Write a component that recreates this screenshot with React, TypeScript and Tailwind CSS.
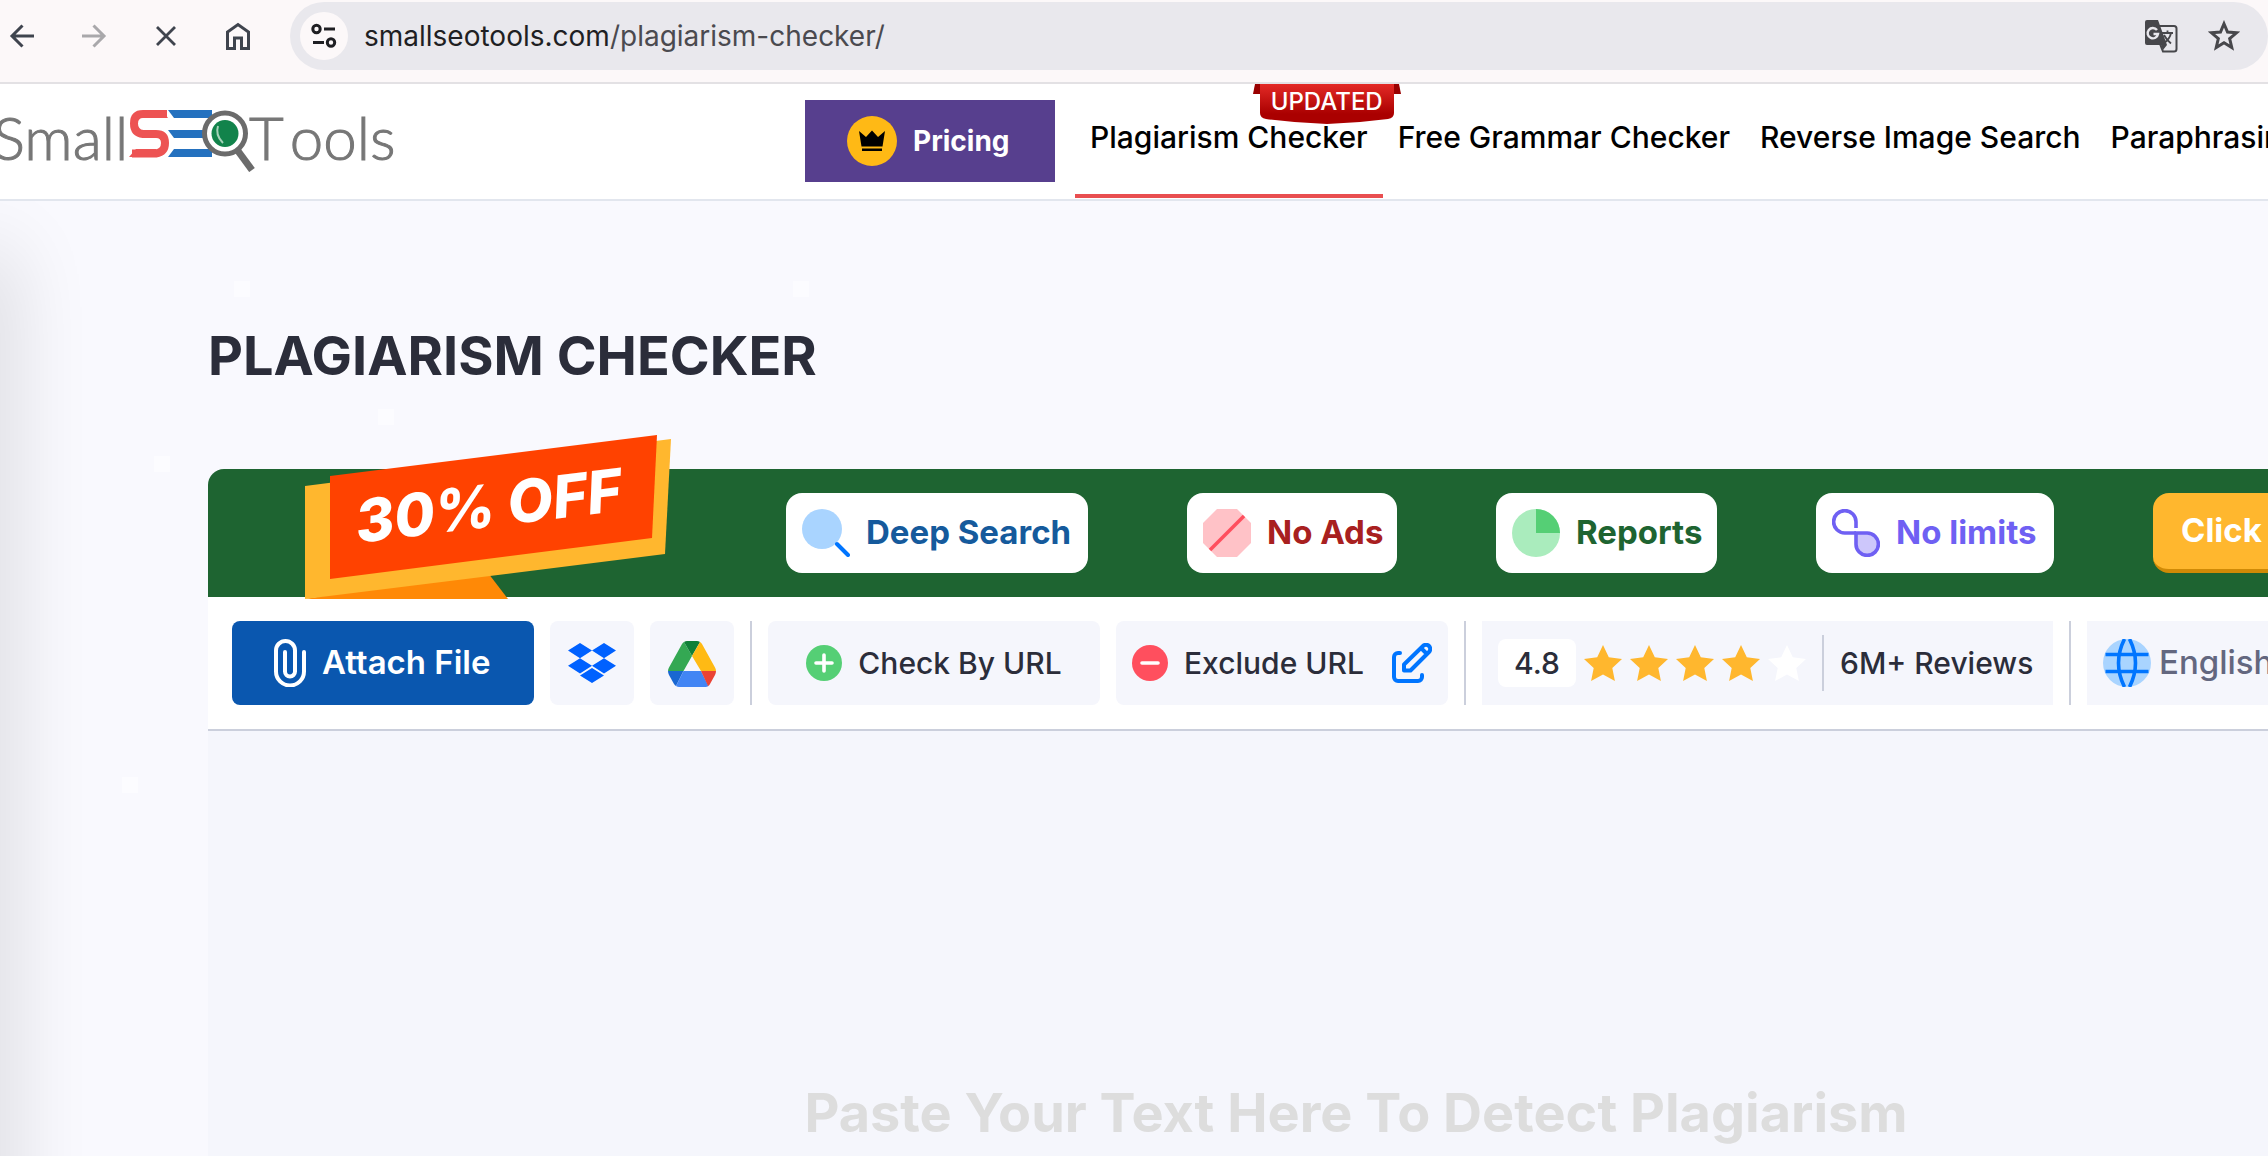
import { useState } from "react"

const navLinks = [
  { href: "#plagiarism-checker", label: "Plagiarism Checker", active: true },
  { href: "#grammar-checker", label: "Free Grammar Checker", active: false },
  { href: "#reverse-image-search", label: "Reverse Image Search", active: false },
  { href: "#paraphrasing-tool", label: "Paraphrasing Tool", active: false },
]

// faint squares in the page background
const specks = [
  "left-[234px] top-[80px]",
  "left-[793px] top-[80px]",
  "left-[378px] top-[208px]",
  "left-[154px] top-[255px]",
  "left-[122px] top-[576px]",
]

const BrowserBar = () => (
  <div className="flex h-[84px] items-start border-b-2 border-[#e3e1e4] bg-[#fcf8f9] pt-[2px]">
    <div className="flex h-[68px] w-[290px] shrink-0 items-center text-[#3f444e]">
      <button aria-label="Back" className="ml-[8px] w-[28px]">
        <svg className="h-[28px] w-[28px]" viewBox="0 0 28 28" fill="none" stroke="currentColor" strokeWidth="3">
          <path d="M26 14H4M14.5 3.5L4 14l10.500 10.500" />
        </svg>
      </button>
      <button aria-label="Forward" className="ml-[44px] w-[28px] text-[#a9a8ab]">
        <svg className="h-[28px] w-[28px]" viewBox="0 0 28 28" fill="none" stroke="currentColor" strokeWidth="3">
          <path d="M2 14h22M13.500 3.500L24 14 13.500 24.500" />
        </svg>
      </button>
      <button aria-label="Stop" className="ml-[44px] w-[28px]">
        <svg className="h-[28px] w-[28px]" viewBox="0 0 28 28" fill="none" stroke="currentColor" strokeWidth="2.800">
          <path d="M5 5l18 18M23 5L5 23" />
        </svg>
      </button>
      <button aria-label="Home" className="ml-[44px] w-[28px]">
        <svg className="h-[28px] w-[28px]" viewBox="0 0 28 28" fill="none" stroke="currentColor" strokeWidth="3">
          <path d="M3.500 26.500V10L14 2.500 24.500 10v16.500H17.500V16h-7v10.500z" />
        </svg>
      </button>
    </div>
    <div className="flex h-[68px] min-w-0 flex-1 items-center rounded-full bg-[#e9e8ed] pl-[10px] pr-[28px]">
      <button aria-label="Site information" className="flex h-[48px] w-[48px] items-center justify-center rounded-full bg-[#fcf8f9] text-[#1f1f23]">
        <svg className="h-[28px] w-[28px]" viewBox="0 0 28 28" fill="none" stroke="currentColor" strokeWidth="3">
          <circle cx="6.500" cy="7" r="3.700" />
          <path d="M14 7h11M3 20.500h11" />
          <circle cx="21" cy="20.500" r="3.700" />
        </svg>
      </button>
      <p className="ml-[16px] flex-1 font-['Inter',sans-serif] text-[28px] text-[#1f1f23]">
        smallseotools.com<span className="text-[#4b4a4f]">/plagiarism-checker/</span>
      </p>
      <button aria-label="Translate this page" className="text-[#47474b]">
        <svg className="h-[34px] w-[34px]" viewBox="0 0 34 34">
          <path d="M3 1h11l9 25-4 5-2-5H3a2 2 0 0 1-2-2V3a2 2 0 0 1 2-2z" fill="currentColor" />
          <path d="M15 7h15a2.500 2.500 0 0 1 2.500 2.500V30a2.500 2.500 0 0 1-2.500 2.500H19L16 25" fill="none" stroke="currentColor" strokeWidth="2" />
          <path d="M13 11A5.200 5.200 0 1 0 14 15H9.500" fill="none" stroke="#e9e8ed" strokeWidth="2.400" />
          <path d="M18 14h11M23.500 11.500V14M27 14c-1 5-4 8-7 10M20 16c2 4 4 6 7 8.500" fill="none" stroke="currentColor" strokeWidth="1.800" />
        </svg>
      </button>
      <button aria-label="Bookmark this tab" className="ml-[30px] text-[#47474b]">
        <svg className="h-[32px] w-[32px]" viewBox="0 0 30 30" fill="none" stroke="currentColor" strokeWidth="2.800">
          <path d="M15 3.500l3.300 7.800 8.500.7-6.500 5.500 2 8.300L15 21.400l-7.300 4.400 2-8.300L3.200 12l8.500-.7z" />
        </svg>
      </button>
    </div>
  </div>
)

const Logo = () => (
  <a href="#home" aria-label="SmallSEOTools" className="-ml-[7px] flex h-[62px] items-start font-['Lato',sans-serif] text-[60px] font-light leading-[54px] text-[#777777] [-webkit-text-stroke:1px]">
    <span className="w-[136px] pr-1 text-right">Small</span>
    <svg className="h-[62px] w-[128px]" viewBox="129 110 128 62" fill="none">
      <path d="M167 114h-24q-9 0-9 9.500t9 10.500h13q9 0 9 9t-9 10.500h-24" stroke="#ed5353" strokeWidth="8" />
      <path d="M129 157l7-8h20v8zM162 110l6 8h-12v-8z" fill="#ed5353" />
      <path d="M168 110h44v8h-38zM168 130h40v8h-34zM174 149h38v8h-44z" fill="#2471bf" />
      <circle cx="225" cy="133.500" r="20.500" fill="#fff" stroke="#6b6b6b" strokeWidth="5" />
      <circle cx="225" cy="133.500" r="13.500" fill="#12834b" />
      <path d="M218 126q-3 9 5 17" stroke="#a5d3b9" strokeWidth="2" />
      <path d="M238 151l14 19" stroke="#6b6b6b" strokeWidth="7" />
    </svg>
    <span className="-ml-[8px]">T</span>
    <span className="ml-[6px]">ools</span>
  </a>
)

const SiteHeader = () => (
  <header className="flex h-[117px] items-start border-b-2 border-[#e2e6ee] bg-white">
    <div className="w-[805px] shrink-0 pt-[26px]">
      <Logo />
    </div>
    <a href="#pricing" className="mt-[16px] flex h-[82px] w-[250px] shrink-0 items-center bg-[#573f8e] pl-[42px] text-[28px] font-bold text-white">
      <svg className="mr-[16px] h-[50px] w-[50px]" viewBox="0 0 50 50">
        <circle cx="25" cy="25" r="25" fill="#ffb915" />
        <path d="M12 15l7 6 6-6.500 6 6.500 7-6-2.500 15.500h-21zM15 32.500h20v2.500H15z" fill="#000" />
      </svg>
      Pricing
    </a>
    <nav className="ml-[20px] flex whitespace-nowrap text-[30px] font-medium text-black">
      {navLinks.map((link) => (
        <a
          key={link.label}
          href={link.href}
          className={`relative h-[114px] border-b-4 px-[15px] pt-[32px] leading-[42px] ${link.active ? "border-[#e94e50]" : "border-transparent"}`}
        >
          {link.label}
          {link.active && (
            <span className="absolute -right-[18px] top-0 flex h-[40px] w-[148px] justify-center text-[24px] leading-[36px] text-white">
              <svg className="absolute inset-0 h-full w-full" viewBox="0 0 148 40">
                <defs>
                  <linearGradient id="ribbon" x1="0" y1="0" x2="0" y2="1">
                    <stop offset="0" stopColor="#e32a26" />
                    <stop offset="0.750" stopColor="#aa0000" />
                  </linearGradient>
                </defs>
                <path d="M2 0h144l2 10h-148z" fill="#990000" />
                <path d="M7 0h134v29q0 5-6 6-30 4-61 5-31-1-61-5-6-1-6-6z" fill="url(#ribbon)" />
              </svg>
              <span className="relative">UPDATED</span>
            </span>
          )}
        </a>
      ))}
    </nav>
  </header>
)

const SaleBadge = () => (
  <div className="relative h-[128px] w-[382px] shrink-0">
    <svg className="absolute left-0 -top-[34px] h-[164px] w-[366px]" viewBox="0 0 366 164">
      <path d="M0 164l180-30 23 30z" fill="#ff8906" />
      <path d="M0 51L366 4l-6 115L0 164z" fill="#ffb72e" />
      <path d="M25 41L352 0l-5 103L25 144z" fill="#ff4200" />
      <text x="53" y="108" transform="rotate(-7 53 108)" fill="#fff" className="font-['Inter',sans-serif] text-[59px] font-extrabold italic">30% OFF</text>
    </svg>
  </div>
)

const features = [
  {
    label: "Deep Search",
    color: "text-[#155a9c]",
    width: "w-[302px]",
    icon: (
      <>
        <circle cx="20" cy="20" r="20" fill="#a9d4ff" />
        <path d="M35 35l11 11" stroke="#0075ff" strokeWidth="4" strokeLinecap="round" />
      </>
    ),
  },
  {
    label: "No Ads",
    color: "text-[#a82020]",
    width: "w-[210px]",
    icon: (
      <>
        <path d="M14 0h20l14 14v20L34 48H14L0 34V14z" fill="#ffc2c7" />
        <path d="M7 41L41 7" stroke="#ff4f5e" strokeWidth="3.500" />
      </>
    ),
  },
  {
    label: "Reports",
    color: "text-[#1e6431]",
    width: "w-[221px]",
    icon: (
      <>
        <circle cx="24" cy="24" r="24" fill="#aaecbd" />
        <path d="M24 0a24 24 0 0 1 24 24H24z" fill="#55cf75" />
      </>
    ),
  },
  {
    label: "No limits",
    color: "text-[#6f60f3]",
    width: "w-[238px]",
    icon: (
      <g stroke="#6f60f3" strokeWidth="3.600" fill="none">
        <path d="M24 24h11a11.200 11.200 0 1 1-11 11z" fill="#cdc7fb" />
        <path d="M24 19v-6A11.200 11.200 0 1 0 13 24h11" />
      </g>
    ),
  },
]

const PromoBar = () => (
  <div className="flex h-[128px] items-center gap-[99px] rounded-t-2xl bg-[#1e6431] pl-[97px]">
    <SaleBadge />
    {features.map((feature) => (
      <div key={feature.label} className={`flex h-[80px] shrink-0 items-center gap-4 whitespace-nowrap rounded-2xl bg-white pl-4 text-[33px] font-bold ${feature.width} ${feature.color}`}>
        <svg className="h-[48px] w-[48px] shrink-0" viewBox="0 0 48 48">{feature.icon}</svg>
        {feature.label}
      </div>
    ))}
    <button className="h-[80px] shrink-0 whitespace-nowrap rounded-2xl border-b-4 border-[#d08a06] bg-[#ffb72e] px-7 text-[33px] font-bold text-white">
      Click Here
    </button>
  </div>
)

const Divider = () => <div className="w-[2px] self-stretch bg-[#cbcfdc]" />

const Star = ({ filled }: { filled: boolean }) => (
  <svg className={`h-[36px] w-[38px] ${filled ? "text-[#ffb72e]" : "text-white"}`} viewBox="0 0 38 36" fill="currentColor">
    <path d="M19 0l5.800 12.300L38 14l-9.700 9 2.600 13L19 29.600 7.100 36l2.600-13L0 14l13.200-1.700z" />
  </svg>
)

const FileToolbar = () => {
  const [language, setLanguage] = useState("English")

  return (
    <div className="flex items-center gap-4 whitespace-nowrap border-b-2 border-[#cbcfdc] bg-white p-6 text-[30px] font-medium text-[#2b2d3a] *:shrink-0">
      <button className="flex h-[84px] w-[302px] items-center rounded-lg bg-[#0a57af] pl-[42px] text-[33px] font-semibold text-white">
        <svg className="mr-4 h-[48px] w-[32px]" viewBox="0 0 32 48" fill="none" stroke="currentColor" strokeWidth="4" strokeLinecap="round">
          <path d="M30 13v19.500a14 14 0 0 1-28 0V11.500a9.500 9.500 0 0 1 19 0v21a5 5 0 0 1-10 0V13" />
        </svg>
        Attach File
      </button>
      <button aria-label="Dropbox" className="flex h-[84px] w-[84px] items-center justify-center rounded-lg bg-[#f5f6fc]">
        <svg className="h-[40px] w-[48px]" viewBox="0 0 48 40" fill="#0061ff">
          <path d="M12 0l12 7.600-12 7.600L0 7.600zM36 0l12 7.600-12 7.600-12-7.600zM12 15.200l12 7.600-12 7.600L0 22.800zM36 15.200l12 7.600-12 7.600-12-7.600zM24 25l12 7.500L24 40l-12-7.500z" />
        </svg>
      </button>
      <button aria-label="Google Drive" className="flex h-[84px] w-[84px] items-center justify-center rounded-lg bg-[#f5f6fc]">
        <svg className="h-[48px] w-[48px]" viewBox="0 0 48 48">
          <path d="M16 3l8 14L15.500 32H0q0-2 1-3.500L14 5q1-1.500 2-2z" fill="#34a853" />
          <path d="M16 3q1.500-1 3-1h10q1.500 0 3 1l-8 14z" fill="#0f8038" />
          <path d="M32 3q1 .500 2 2l13 23.500q1 1.500 1 3.500H33L24 17z" fill="#ffba14" />
          <path d="M0 32h15.500L8 47q-1-.5-2-2L1 36q-1-2-1-4z" fill="#1967d2" />
          <path d="M15.500 32H33l7.500 15q-1.500 1-3 1H11q-1.500 0-3-1z" fill="#4285f4" />
          <path d="M33 32h15q0 2-1 4l-5 9q-.5 1.500-2 2z" fill="#ea4335" />
        </svg>
      </button>
      <Divider />
      <button className="flex h-[84px] w-[332px] items-center justify-center gap-4 rounded-lg bg-[#f5f6fc]">
        <svg className="h-[36px] w-[36px]" viewBox="0 0 36 36" stroke="#fff" strokeWidth="3.600" strokeLinecap="round">
          <circle cx="18" cy="18" r="18" fill="#55cf75" stroke="none" />
          <path d="M18 10v16M10 18h16" />
        </svg>
        Check By URL
      </button>
      <div className="flex h-[84px] w-[332px] items-center justify-between rounded-lg bg-[#f5f6fc] px-4">
        <button className="flex items-center gap-4">
          <svg className="h-[36px] w-[36px]" viewBox="0 0 36 36" stroke="#fff" strokeWidth="3.600" strokeLinecap="round">
            <circle cx="18" cy="18" r="18" fill="#ff4f5e" stroke="none" />
            <path d="M10 18h16" />
          </svg>
          Exclude URL
        </button>
        <button aria-label="Edit excluded URLs" className="text-[#0075ff]">
          <svg className="h-[40px] w-[40px]" viewBox="0 0 40 40" fill="none" stroke="currentColor" strokeWidth="4" strokeLinecap="round" strokeLinejoin="round">
            <path d="M8 10H6a4 4 0 0 0-4 4v20a4 4 0 0 0 4 4h20a4 4 0 0 0 4-4v-2" />
            <path d="M12 21.500L31 3a3.800 3.800 0 0 1 6 6L18.500 27.500H12zM29 5l6 6" />
          </svg>
        </button>
      </div>
      <Divider />
      <div className="flex h-[84px] w-[571px] items-center bg-[#f5f6fc] pl-4">
        <span className="flex h-[48px] w-[78px] items-center justify-center rounded-lg bg-white">4.8</span>
        <div className="ml-2 flex gap-2">
          {[1, 2, 3, 4, 5].map((n) => (
            <Star key={n} filled={n <= 4} />
          ))}
        </div>
        <div className="mx-4 h-[56px] w-[2px] bg-[#cbcfdc]" />
        6M+ Reviews
      </div>
      <Divider />
      <label className="flex h-[84px] items-center gap-2 bg-[#f5f6fc] px-4 text-[33px] text-[#63677f]">
        <svg className="h-[48px] w-[48px]" viewBox="0 0 48 48" fill="none" stroke="#0075ff" strokeWidth="3.600">
          <circle cx="24" cy="24" r="24" fill="#a9d4ff" stroke="none" />
          <path d="M2.500 15.500h43M2.500 32.500h43M21.500 0q-6 12-6 24t6 24M26.500 0q6 12 6 24t-6 24" />
        </svg>
        <select aria-label="Language" value={language} onChange={(e) => setLanguage(e.target.value)} className="appearance-none bg-transparent">
          <option>English</option>
          <option>Español</option>
        </select>
      </label>
    </div>
  )
}

const App = () => {
  const [text, setText] = useState("")

  return (
    <div className="flex h-screen flex-col overflow-hidden bg-[#f9f9fe] font-['Inter',sans-serif]">
      <BrowserBar />
      <SiteHeader />
      <main className="relative flex flex-1 flex-col overflow-hidden pl-[208px]">
        <div className="absolute -bottom-[80px] right-full top-[60px] w-[40px] shadow-[0_0_80px_10px_rgba(0,0,0,0.14)]" />
        {specks.map((speck) => (
          <div key={speck} className={`absolute h-4 w-4 bg-[#fcfcff] ${speck}`} />
        ))}
        <h1 className="mt-[113px] text-[54px] font-bold leading-[84px] text-[#2b2d3a]">PLAGIARISM CHECKER</h1>
        <section className="relative mt-[71px] flex min-w-[2296px] flex-1 flex-col self-start">
          <PromoBar />
          <FileToolbar />
          <textarea
            aria-label="Text to check"
            value={text}
            onChange={(e) => setText(e.target.value)}
            placeholder="Paste Your Text Here To Detect Plagiarism"
            className="w-full flex-1 resize-none bg-[#f5f6fc] pt-[342px] text-center text-[54px] font-bold leading-[80px] text-[#2b2d3a] outline-none placeholder:text-[#dddddd]"
          />
        </section>
      </main>
    </div>
  )
}

export default App
